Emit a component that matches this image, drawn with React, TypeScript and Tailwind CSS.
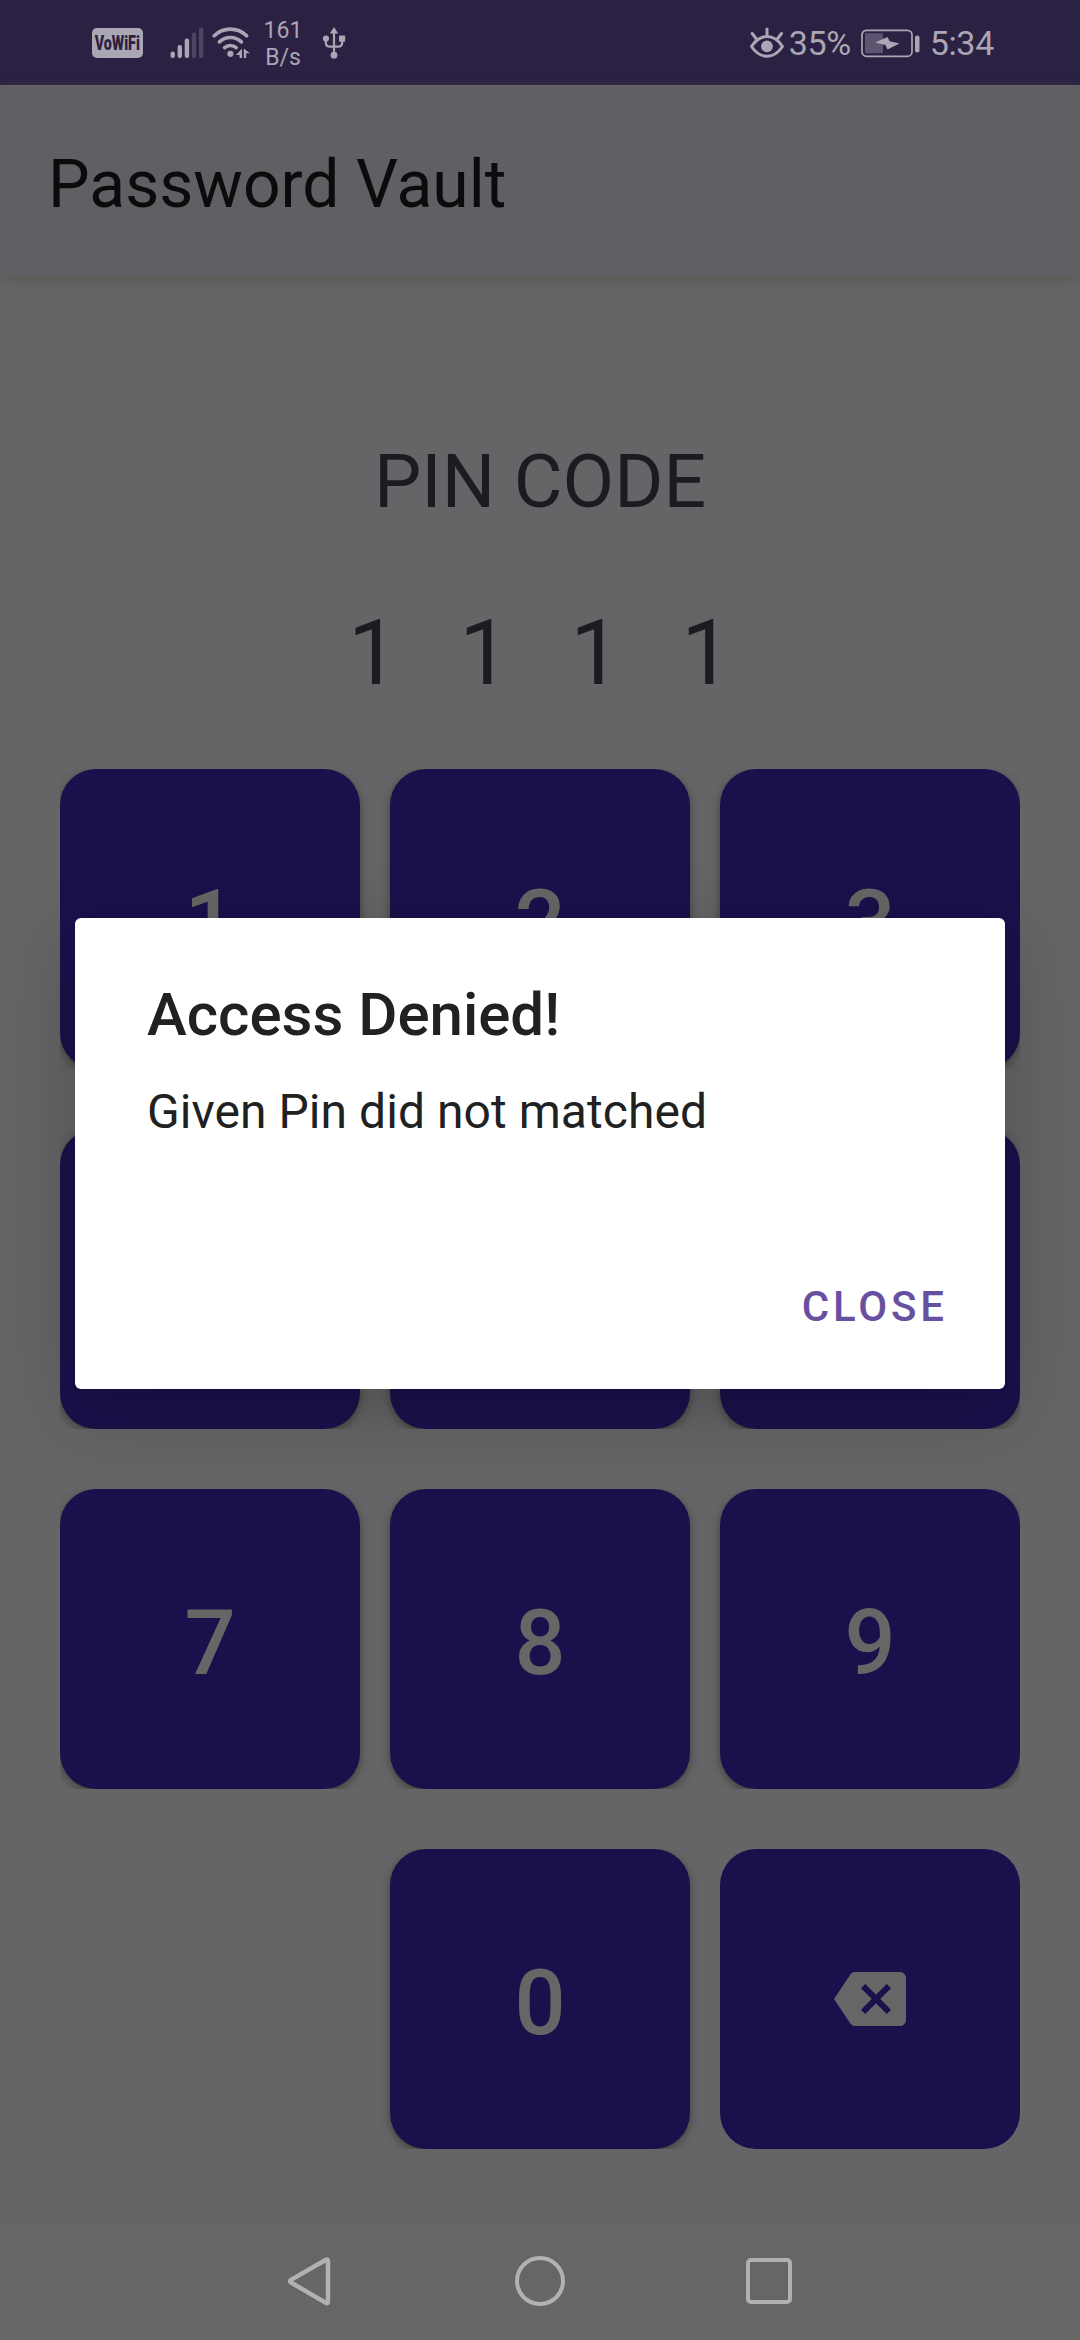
import type { ReactNode } from "react";

const ink = "#aaa6b3";

function Key({ children, flat = false }: { children?: ReactNode; flat?: boolean }) {
  return (
    <button
      className={
        "flex h-[300px] w-[300px] items-center justify-center rounded-[36px] bg-[#1b104b] text-[90px] leading-none font-medium text-[#666666] " +
        (flat ? "" : "shadow-[0_3px_9px_rgba(50,55,45,0.75)]")
      }
    >
      {children}
    </button>
  );
}

function KeyRow({ children }: { children: ReactNode }) {
  return <div className="flex h-[300px] justify-between overflow-hidden">{children}</div>;
}

function Digit({ children }: { children: ReactNode }) {
  return <span className="pt-[9px]">{children}</span>;
}

function StatusBar() {
  return (
    <header className="flex h-[85px] shrink-0 items-center bg-[#2b2143] pr-[86px] pl-[92px] text-[#aaa6b3]">
      <div className="flex h-[30px] w-[51px] items-center justify-center rounded-[5px] bg-[#aaa6b3]">
        <span className="scale-x-[0.68] pt-[1px] text-[21px] leading-none font-black text-[#2b2143]">VoWiFi</span>
      </div>
      <svg className="ml-[27px] h-[32px] w-[34px]" viewBox="0 0 34 32" fill={ink}>
        <rect x="0.5" y="24.5" width="4.4" height="6.5" rx="2" />
        <rect x="7.6" y="18" width="4.4" height="13" rx="2" />
        <rect x="14.7" y="11.5" width="4.4" height="19.5" rx="2" />
        <rect x="21.8" y="5.5" width="4.4" height="25.5" rx="2" opacity="0.28" />
        <rect x="28.9" y="0.5" width="4.4" height="30.5" rx="2" opacity="0.28" />
      </svg>
      <svg className="ml-[8px] h-[32px] w-[38px]" viewBox="0 0 38 32" fill="none" stroke={ink} strokeWidth="3.6" strokeLinecap="round">
        <path d="M2.2 8.800a23 23 0 0 1 32.400 0" />
        <path d="M7.400 14.900a16 16 0 0 1 22 0" />
        <path d="M12.600 20.600a9 9 0 0 1 11.600 0" />
        <circle cx="18.4" cy="26.8" r="3.1" fill={ink} stroke="none" />
        <path d="M24 28l6-6.500V31h-2.400v-3z M38 26.200L31.800 21.500V31h2.400v-4.800z" fill={ink} stroke="none" />
      </svg>
      <div className="ml-[14px] flex w-[38px] flex-col items-center pt-[3px] text-[23px] leading-[27px]">
        <span>161</span>
        <span>B/s</span>
      </div>
      <svg className="ml-[20px] h-[34px] w-[24px]" viewBox="0 0 24 34" fill={ink}>
        <path d="M12 1l4.200 6.600H7.800z" />
        <path d="M12 5v24M3.800 13v3.500q0 4.200 4.200 4.200h8q4.200 0 4.200-4.200V13" fill="none" stroke={ink} strokeWidth="2.2" />
        <circle cx="4" cy="12.5" r="3.1" />
        <rect x="17" y="9.5" width="6.2" height="6.2" rx="1" />
        <circle cx="12" cy="29.2" r="3.4" />
      </svg>
      <div className="ml-auto flex items-center">
        <svg className="h-[34px] w-[36px]" viewBox="0 0 36 34" fill="none" stroke={ink} strokeWidth="3" strokeLinecap="round">
          <path d="M2.500 20.500Q9 10.600 18 10.600t15.500 9.900Q27 30.200 18 30.200T2.500 20.500z" strokeLinejoin="round" />
          <circle cx="18" cy="20.3" r="5.9" fill={ink} stroke="none" />
          <path d="M18 3v6M3.200 7.500l3.800 5M32.500 7.500l-3.800 5" />
        </svg>
        <span className="ml-[4px] w-[65px] text-[34px] leading-none tracking-[-0.3px]">35%</span>
        <svg className="ml-[7px] h-[30px] w-[60px]" viewBox="0 0 60 30">
          <rect x="1" y="2.3" width="50" height="26" rx="4.5" fill="none" stroke={ink} strokeWidth="1.7" />
          <rect x="4" y="5.3" width="18" height="20" rx="1" fill={ink} opacity="0.4" />
          <path d="M14 14.500L26.500 9l2.200 4.300L38.500 15.500 26.500 21.500l-2-4.500z" fill={ink} />
          <rect x="54" y="7.5" width="4.5" height="17" rx="2" fill={ink} />
        </svg>
        <span className="ml-[9px] text-[34px] leading-none tracking-[-0.3px]">5:34</span>
      </div>
    </header>
  );
}

function Dialog() {
  return (
    <div className="absolute top-[918px] left-[75px] flex h-[471px] w-[930px] flex-col rounded-[6px] bg-white px-[72px] text-[#212121] shadow-[0_20px_72px_rgba(0,0,0,0.22)]">
      <h2 className="mt-[62px] text-[60px] leading-[70px] font-medium">Access Denied!</h2>
      <p className="mt-[34px] text-[48px] leading-[56px] tracking-[0.05px]">Given Pin did not matched</p>
      <button className="mt-[142px] mr-[-15px] self-end text-[42px] leading-[50px] font-medium tracking-[3.9px] text-[#67509f]">
        CLOSE
      </button>
    </div>
  );
}

export default function App() {
  return (
    <div className="relative flex h-[2340px] w-[1080px] flex-col overflow-hidden bg-[#666467] font-['Roboto',sans-serif]">
      <StatusBar />
      <div className="flex h-[192px] shrink-0 items-center bg-[#615f64] px-[48px] pt-[7px] shadow-[0_3px_10px_rgba(85,85,78,0.7)]">
        <h1 className="text-[66px] leading-none text-[#0b0b0b]">Password Vault</h1>
      </div>
      <main className="flex flex-col px-[60px] text-[#1c1b1f]">
        <div className="mt-[160px] text-center text-[75px] leading-[88px]">PIN CODE</div>
        <div className="mt-[76px] flex justify-center gap-[60.5px] text-[90px] leading-[106px]">
          <span>1</span>
          <span>1</span>
          <span>1</span>
          <span>1</span>
        </div>
        <div className="mt-[62px] flex flex-col gap-[60px]">
          <KeyRow>
            <Key><Digit>1</Digit></Key>
            <Key><Digit>2</Digit></Key>
            <Key><Digit>3</Digit></Key>
          </KeyRow>
          {/* The dialog covers the labels of this row. */}
          <KeyRow>
            <Key />
            <Key />
            <Key />
          </KeyRow>
          <KeyRow>
            <Key><Digit>7</Digit></Key>
            <Key><Digit>8</Digit></Key>
            <Key><Digit>9</Digit></Key>
          </KeyRow>
          <KeyRow>
            <div className="w-[300px]" />
            <Key><Digit>0</Digit></Key>
            <Key flat>
              <svg className="h-[72px] w-[72px]" viewBox="0 0 24 24" fill="#666666">
                <path d="M22 3H7c-.69 0-1.230.350-1.590.880L0 12l5.410 8.110c.36.530.9.890 1.590.890h15c1.100 0 2-.9 2-2V5c0-1.100-.9-2-2-2zm-3 12.590L17.590 17 14 13.410 10.410 17 9 15.590 12.590 12 9 8.410 10.410 7 14 10.590 17.590 7 19 8.410 15.410 12 19 15.590z" />
              </svg>
            </Key>
          </KeyRow>
        </div>
      </main>
      <nav className="mt-auto flex h-[119px] items-center bg-[#666666] px-[287px]">
        <svg className="h-[54px] w-[44px]" viewBox="0 0 44 54" fill="none" stroke="#b1b1b1" strokeWidth="4.5" strokeLinejoin="round">
          <path d="M38.500 6q2.500-1.500 2.500 1.300v40q0 2.800-2.500 1.300L4 28.500q-2-1.300 0-2.600z" />
        </svg>
        <div className="ml-[184px] h-[50px] w-[50px] rounded-full border-[4.5px] border-[#b1b1b1]" />
        <div className="ml-[181px] h-[46px] w-[46px] rounded-[5px] border-[4.5px] border-[#b1b1b1]" />
      </nav>
      <Dialog />
    </div>
  );
}
